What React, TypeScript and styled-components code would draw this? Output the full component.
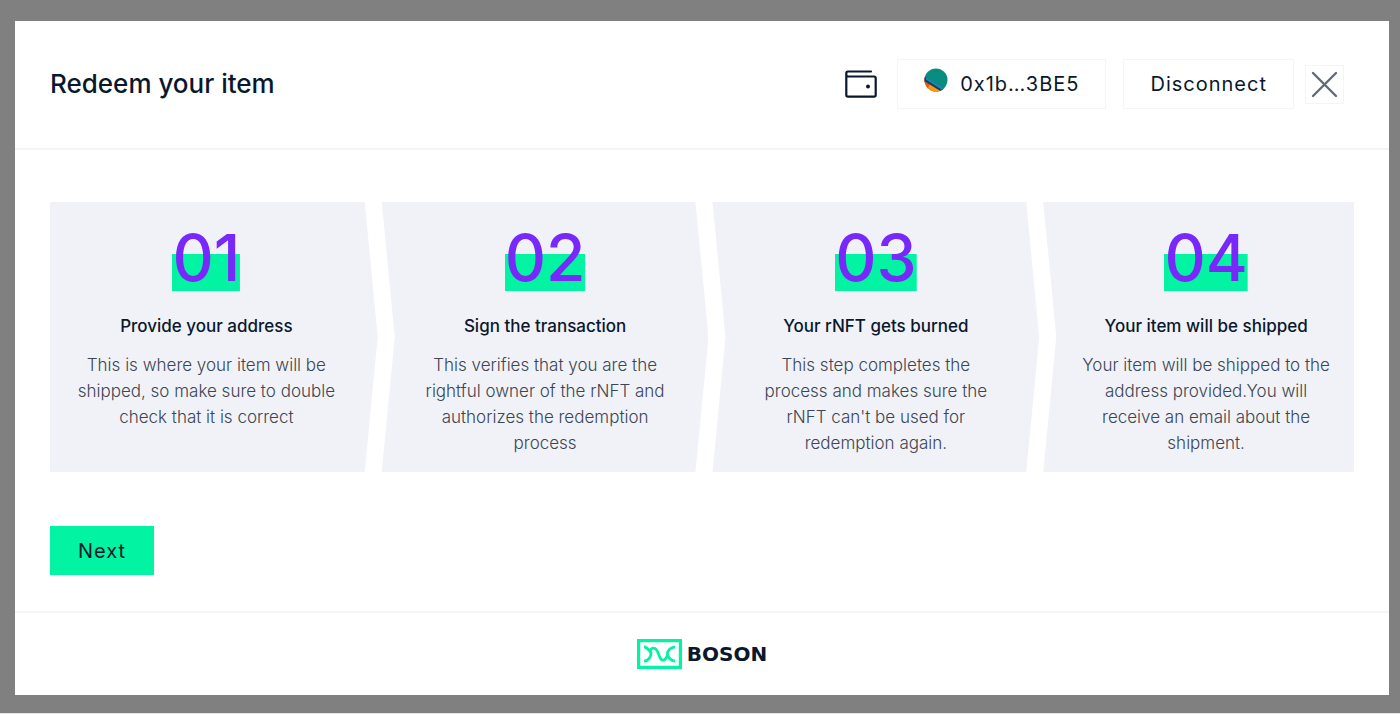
import React from "react";
import styled, { createGlobalStyle } from "styled-components";

const color = {
  green: "#02f3a2",
  purple: "#7829f9",
  ink: "#09182c",
  text: "#3c4653",
  panel: "#f1f2f8",
  line: "#f5f5f6",
  slate: "#5f6b7c",
};

const GlobalStyle = createGlobalStyle`
  *, *::before, *::after { box-sizing: border-box; }
  body {
    margin: 0;
    background: #808080;
    color: ${color.ink};
    font-family: Inter, "Liberation Sans", sans-serif;
  }
  h1, h2, p, ol { margin: 0; padding: 0; }
`;

const Backdrop = styled.div`
  min-height: 100vh;
  padding: 21px 11px 18px 15px;
  border-bottom: 1px solid #e4e4e4;
`;

const Dialog = styled.section`
  background: #ffffff;
`;

const Header = styled.header`
  display: flex;
  align-items: center;
  justify-content: space-between;
  padding: 38px 45px 39px 35px;
  border-bottom: 2px solid ${color.line};
`;

const Title = styled.h1`
  font-size: 26px;
  line-height: 36px;
  font-weight: 500;
`;

const Account = styled.div`
  display: flex;
  align-items: center;
`;

const Wallet = styled.svg`
  width: 32px;
  height: 28px;
  margin-right: 20px;
`;

const Button = styled.button<{ $primary?: boolean }>`
  display: flex;
  align-items: center;
  gap: 12px;
  height: ${(p) => (p.$primary ? 49 : 50)}px;
  padding: 0 ${(p) => (p.$primary ? 28 : 26)}px;
  border: ${(p) => (p.$primary ? "0" : `1px solid ${color.line}`)};
  background: ${(p) => (p.$primary ? color.green : "#ffffff")};
  color: ${color.ink};
  font-family: inherit;
  font-size: 20px;
  line-height: 24px;
  font-weight: 400;
  letter-spacing: 1px;
  cursor: pointer;

  & + & {
    margin-left: 17px;
  }
`;

const Avatar = styled.svg`
  width: 24px;
  height: 24px;
  margin-bottom: 8px;
`;

const CloseButton = styled.button`
  display: grid;
  place-items: center;
  width: 39px;
  height: 39px;
  margin-left: 11px;
  padding: 0;
  border: 1px solid ${color.line};
  background: #ffffff;
  cursor: pointer;
`;

const Body = styled.main`
  padding: 52px 35px 36px;
`;

const Steps = styled.ol`
  display: grid;
  grid-template-columns: 328fr 327fr 327fr 311fr;
  gap: 4px;
  margin-bottom: 54px;
  list-style: none;
`;

const Step = styled.li`
  padding: 23px 38px 16px;
  background: ${color.panel};
  text-align: center;
  clip-path: polygon(0 0, calc(100% - 13px) 0, 100% 50%, calc(100% - 13px) 100%, 0 100%, 13px 50%);

  &:first-child {
    padding-left: 23px;
    clip-path: polygon(0 0, calc(100% - 13px) 0, 100% 50%, calc(100% - 13px) 100%, 0 100%);
  }

  &:last-child {
    padding-right: 23px;
    clip-path: polygon(0 0, 100% 0, 100% 100%, 0 100%, 13px 50%);
  }
`;

const StepNumber = styled.div`
  width: fit-content;
  margin: 0 auto 23px;
  background: linear-gradient(${color.green}, ${color.green}) bottom / 100% 37px no-repeat;
  color: ${color.purple};
  font-size: 64px;
  line-height: 66px;
  font-weight: 500;
`;

const StepTitle = styled.h2`
  margin-bottom: 14px;
  font-size: 17px;
  line-height: 24px;
  font-weight: 500;
`;

const StepText = styled.p`
  color: ${color.text};
  font-size: 17px;
  line-height: 26px;
  font-weight: 300;
`;

const Footer = styled.footer`
  display: flex;
  align-items: center;
  justify-content: center;
  gap: 5px;
  height: 84px;
  border-top: 2px solid ${color.line};
`;

const LogoMark = styled.svg`
  width: 45px;
  height: 30px;
`;

const LogoName = styled.span`
  font-family: "DejaVu Sans", sans-serif;
  font-size: 20px;
  line-height: 24px;
  font-weight: 700;
`;

const steps = [
  {
    number: "01",
    title: "Provide your address",
    text: "This is where your item will be shipped, so make sure to double check that it is correct",
  },
  {
    number: "02",
    title: "Sign the transaction",
    text: "This verifies that you are the rightful owner of the rNFT and authorizes the redemption process",
  },
  {
    number: "03",
    title: "Your rNFT gets burned",
    text: "This step completes the process and makes sure the rNFT can't be used for redemption again.",
  },
  {
    number: "04",
    title: "Your item will be shipped",
    text: "Your item will be shipped to the address provided.You will receive an email about the shipment.",
  },
];

export default function App() {
  return (
    <>
      <GlobalStyle />
      <Backdrop>
        <Dialog role="dialog" aria-labelledby="redeem-title">
          <Header>
            <Title id="redeem-title">Redeem your item</Title>
            <Account>
              <Wallet viewBox="0 0 32 28" fill="none" stroke={color.ink} strokeWidth="2.200" strokeLinecap="round" strokeLinejoin="round" aria-hidden="true">
                <path d="M26 1.500H3Q1.300 1.500 1.300 3.300V25Q1.300 26.700 3 26.700H29Q30.700 26.700 30.700 25V8.200Q30.700 6.500 29 6.500H3Q1.300 6.500 1.300 4.400" />
                <circle cx="23" cy="16.500" r="2" fill={color.ink} stroke="none" />
              </Wallet>
              <Button type="button">
                <Avatar viewBox="0 0 24 24" aria-hidden="true">
                  <clipPath id="avatar-clip">
                    <circle cx="12" cy="12" r="11.5" />
                  </clipPath>
                  <g clipPath="url(#avatar-clip)">
                    <path d="M0 0h24v24H0z" fill="#078d80" />
                    <path d="M-1 9L24 25H-1z" fill="#fa9a0a" />
                    <path d="M-1 9L7 14L4 20L-1 18z" fill="#f4511e" />
                    <path d="M0 8.500L21 22L18 24L0 13z" fill="#173f5e" />
                    <path d="M2 10.500L20 22" stroke="#2087c4" strokeWidth="1.500" />
                  </g>
                </Avatar>
                0x1b…3BE5
              </Button>
              <Button type="button">Disconnect</Button>
              <CloseButton type="button" aria-label="Close">
                <svg width="27" height="27" viewBox="0 0 27 27" stroke={color.slate} strokeWidth="2.400" strokeLinecap="round" aria-hidden="true">
                  <path d="M2 2L25 25M25 2L2 25" />
                </svg>
              </CloseButton>
            </Account>
          </Header>
          <Body>
            <Steps>
              {steps.map((step) => (
                <Step key={step.number}>
                  <StepNumber>{step.number}</StepNumber>
                  <StepTitle>{step.title}</StepTitle>
                  <StepText>{step.text}</StepText>
                </Step>
              ))}
            </Steps>
            <Button type="button" $primary>
              Next
            </Button>
          </Body>
          <Footer>
            <LogoMark viewBox="0 0 45 30" fill="none" stroke={color.green} aria-hidden="true">
              <path d="M1.600 1.600H43.400V28.400H1.600z" strokeWidth="3.200" />
              <path d="M7 7.800C10.500 8 12 11.500 14 13.500C14.200 18 11.500 21.500 7 22.200" strokeWidth="2.800" />
              <path d="M12.500 12.500C14 9.500 16 8.500 18 9.500C22 11.500 21.500 19.500 25 21C27.500 21.800 29 20 30.300 16.500" strokeWidth="2.800" />
              <path d="M38 7.800C33.500 8.200 30.500 11.500 30.300 15C31 18.500 34 22 38 22.200" strokeWidth="2.800" />
            </LogoMark>
            <LogoName>BOSON</LogoName>
          </Footer>
        </Dialog>
      </Backdrop>
    </>
  );
}
